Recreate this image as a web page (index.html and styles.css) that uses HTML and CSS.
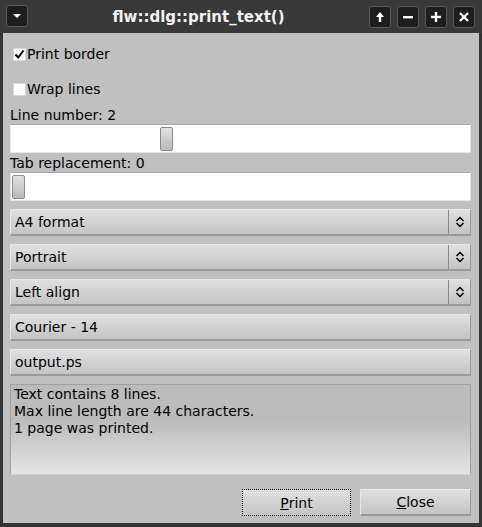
FILE: index.html
```html
<!DOCTYPE html>
<html>
<head>
<meta charset="utf-8">
<link rel="stylesheet" href="styles.css">
</head>
<body>
<div class="window">
  <div class="titlebar">
    <div class="tbtn menu">
      <svg width="10" height="10" viewBox="0 0 10 10"><path d="M1 3 L9 3 L5 7 Z" fill="#fff"/></svg>
    </div>
    <div class="title">flw::dlg::print_text()</div>
    <div class="tbtns">
      <div class="tbtn"><svg width="12" height="12" viewBox="0 0 12 12"><path d="M6 1 L10 6 L7.2 6 L7.2 11 L4.8 11 L4.8 6 L2 6 Z" fill="#fff"/></svg></div>
      <div class="tbtn"><svg width="12" height="12" viewBox="0 0 12 12"><rect x="1" y="5" width="10" height="2.4" fill="#fff"/></svg></div>
      <div class="tbtn"><svg width="12" height="12" viewBox="0 0 12 12"><rect x="1" y="4.8" width="10" height="2.4" fill="#fff"/><rect x="4.8" y="1" width="2.4" height="10" fill="#fff"/></svg></div>
      <div class="tbtn"><svg width="12" height="12" viewBox="0 0 12 12"><path d="M2 2 L10 10 M10 2 L2 10" stroke="#fff" stroke-width="2.4"/></svg></div>
    </div>
  </div>
  <div class="content">
    <div class="check first"><span class="box"><svg width="11" height="11" viewBox="0 0 11 11"><path d="M1.5 5.5 L4.2 8.5 L9.5 1.5" stroke="#000" stroke-width="2" fill="none"/></svg></span><span>Print border</span></div>
    <div class="check"><span class="box"></span><span>Wrap lines</span></div>
    <div class="label">Line number: 2</div>
    <div class="slider"><div class="thumb" style="margin-left:149px"></div></div>
    <div class="label second">Tab replacement: 0</div>
    <div class="slider"><div class="thumb" style="margin-left:1px"></div></div>
    <div class="choice"><span class="ctext">A4 format</span><span class="carrow"><svg width="10" height="12" viewBox="0 0 10 12"><path d="M1.5 5 L5 1.5 L8.5 5 M1.5 7 L5 10.5 L8.5 7" stroke="#000" stroke-width="1.5" fill="none"/></svg></span></div>
    <div class="choice"><span class="ctext">Portrait</span><span class="carrow"><svg width="10" height="12" viewBox="0 0 10 12"><path d="M1.5 5 L5 1.5 L8.5 5 M1.5 7 L5 10.5 L8.5 7" stroke="#000" stroke-width="1.5" fill="none"/></svg></span></div>
    <div class="choice"><span class="ctext">Left align</span><span class="carrow"><svg width="10" height="12" viewBox="0 0 10 12"><path d="M1.5 5 L5 1.5 L8.5 5 M1.5 7 L5 10.5 L8.5 7" stroke="#000" stroke-width="1.5" fill="none"/></svg></span></div>
    <div class="btnrow">Courier - 14</div>
    <div class="btnrow">output.ps</div>
    <div class="output">Text contains 8 lines.<br>Max line length are 44 characters.<br>1 page was printed.</div>
    <div class="actions">
      <div class="button focus"><u>P</u>rint</div>
      <div class="button"><u>C</u>lose</div>
    </div>
  </div>
</div>
</body>
</html>
```
FILE: styles.css
```css
* { box-sizing: border-box; }
html, body { margin: 0; padding: 0; }
body {
  font-family: "DejaVu Sans", sans-serif;
  font-size: 14px;
  color: #000;
  background: #2b2b2b;
}
.window {
  width: 482px;
  height: 527px;
  background: #333333;
  display: flex;
  flex-direction: column;
  padding: 0 3px 4px 3px;
}
.titlebar {
  height: 33px;
  display: flex;
  align-items: center;
  background: #393939;
  margin: 0 -3px;
  padding-left: 6px;
  padding-right: 7px;
}
.tbtn {
  width: 22px;
  height: 22px;
  background: #1e1e1e;
  border: 1px solid #5a5a5a;
  border-radius: 3px;
  display: flex;
  align-items: center;
  justify-content: center;
}
.menu { margin-top: -1px; }
.title {
  flex: 1;
  text-align: center;
  color: #f2f2f2;
  font-weight: bold;
  font-size: 15px;
}
.tbtns { display: flex; gap: 6px; }
.content {
  flex: 1;
  background: #c0c0c0;
  display: flex;
  flex-direction: column;
  padding: 0 8px 0 7px;
}
.check {
  height: 20px;
  display: flex;
  align-items: center;
  padding-left: 3px;
}
.check.first { margin-top: 11px; }
.check + .check { margin-top: 15px; }
.box {
  width: 13px;
  height: 13px;
  background: #fff;
  border: 1px solid #d8d8d8;
  margin-right: 1px;
  display: flex;
  align-items: center;
  justify-content: center;
}
.label {
  height: 17px;
  line-height: 17px;
  margin-top: 8px;
}
.label.second { margin-top: 2px; }
.slider {
  height: 29px;
  background: #fff;
  border-top: 1px solid #a9a9a9;
  border-left: 1px solid #e6e6e6;
  border-right: 1px solid #e6e6e6;
  border-bottom: 1px solid #e6e6e6;
  display: flex;
  align-items: center;
}
.thumb {
  width: 13px;
  height: 24px;
  border: 1px solid #8a8a8a;
  border-radius: 2px;
  background: linear-gradient(#e2e2e2, #b9b9b9);
}
.choice, .btnrow {
  height: 27px;
  margin-top: 8px;
  background: linear-gradient(#e0e0e0, #c4c4c4);
  border-top: 1px solid #e8e8e8;
  border-left: 1px solid #e8e8e8;
  border-right: 1px solid #9a9a9a;
  border-bottom: 2px solid #9a9a9a;
  display: flex;
  align-items: center;
}
.choice:first-of-type { margin-top: 6px; }
.ctext, .btnrow { padding-left: 4px; }
.ctext { flex: 1; }
.carrow {
  width: 22px;
  height: 100%;
  border-left: 1px solid #8a8a8a;
  display: flex;
  align-items: center;
  justify-content: center;
}
.output {
  margin-top: 8px;
  height: 91px;
  line-height: 17px;
  padding: 1px 0 0 3px;
  background: linear-gradient(#bcbcbc 40%, #e4e4e4);
  border: 1px solid #a0a0a0;
  border-bottom-color: #d0d0d0;
}
.actions {
  display: flex;
  justify-content: flex-end;
  gap: 9px;
  margin-top: 14px;
}
.button {
  width: 111px;
  height: 27px;
  display: flex;
  align-items: center;
  justify-content: center;
  background: linear-gradient(#e0e0e0, #c4c4c4);
  border-top: 1px solid #e8e8e8;
  border-left: 1px solid #e8e8e8;
  border-right: 1px solid #9a9a9a;
  border-bottom: 2px solid #9a9a9a;
}
.button.focus {
  width: 109px;
  border: 1px dotted #000;
}
```
